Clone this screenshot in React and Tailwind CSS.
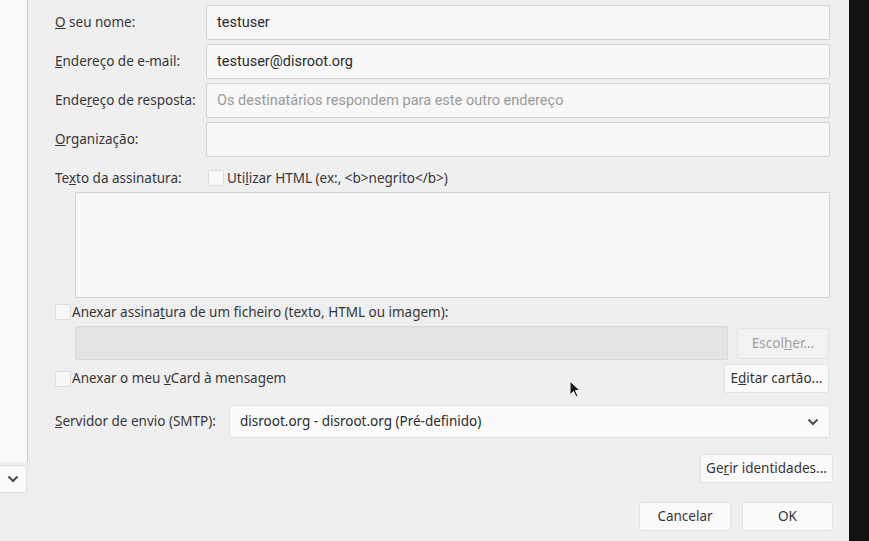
import React from "react";

const label = "text-[13.5px] text-[#363636] font-['Noto_Sans',sans-serif] whitespace-nowrap";
const field = "h-[35px] flex-1 mr-[3px] bg-[#f8f8f8] border border-[#d3d3d3] rounded-[2px] px-[10px] flex items-center text-[14.5px] font-['Roboto',sans-serif]";
const btn = "h-[29px] bg-[#fafafa] border border-[#e3e3e3] rounded-[2px] flex items-center justify-center text-[13.5px] text-[#363636] font-['Noto_Sans',sans-serif]";

function Box() {
  return <div className="w-[16px] h-[16px] shrink-0 bg-[#f8f8f8] border border-[#dcdcdc] rounded-[2px]" />;
}

function Chevron({ className }) {
  return (
    <svg className={className} width="12" height="8" viewBox="0 0 12 8" fill="none">
      <path d="M1.5 1.5 L6 6 L10.5 1.5" stroke="#4a4a4a" strokeWidth="2" />
    </svg>
  );
}

export default function App() {
  return (
    <div className="relative flex h-[541px] w-[869px] overflow-hidden bg-[#efefef]">
      {/* side list */}
      <div className="w-[28px] shrink-0 flex flex-col">
        <div className="h-[462px] bg-[#f9f9f9] border-r border-[#c9c9c9]" />
        <div className="mt-[3px] h-[28px] w-[27px] bg-[#fafafa] border border-[#e2e2e2] border-l-0 rounded-r-[2px] flex items-center justify-center">
          <Chevron />
        </div>
      </div>

      <div className="flex-1 pl-[27px] pr-[16px] pt-[5px]">
        <div className="flex items-center">
          <div className={`${label} w-[151px]`}><u>O</u> seu nome:</div>
          <div className={`${field} text-[#2a2a2a]`}>testuser</div>
        </div>
        <div className="flex items-center mt-[4px]">
          <div className={`${label} w-[151px]`}><u>E</u>ndereço de e-mail:</div>
          <div className={`${field} text-[#2a2a2a]`}>testuser@disroot.org</div>
        </div>
        <div className="flex items-center mt-[4px]">
          <div className={`${label} w-[151px]`}>Ende<u>r</u>eço de resposta:</div>
          <div className={`${field} text-[#9a9a9a]`}>Os destinatários respondem para este outro endereço</div>
        </div>
        <div className="flex items-center mt-[4px]">
          <div className={`${label} w-[151px]`}><u>O</u>rganização:</div>
          <div className={field}></div>
        </div>

        <div className="flex items-center mt-[11px] h-[20px]">
          <div className={`${label} w-[153px]`}>Te<u>x</u>to da assinatura:</div>
          <Box />
          <div className={`${label} ml-[3px]`}>Uti<u>l</u>izar HTML (ex:, &lt;b&gt;negrito&lt;/b&gt;)</div>
        </div>
        <div className="ml-[20px] mr-[3px] mt-[4px] h-[106px] bg-[#f8f8f8] border border-[#d3d3d3] rounded-[2px]" />

        <div className="flex items-center mt-[4px] h-[20px]">
          <Box />
          <div className={`${label} ml-[1px]`}>Anexar assina<u>t</u>ura de um ficheiro (texto, HTML ou imagem):</div>
        </div>
        <div className="flex items-center mt-[4px]">
          <div className="ml-[20px] flex-1 h-[34px] bg-[#e3e3e3] border border-[#d8d8d8] rounded-[2px]" />
          <div className={`${btn} ml-[9px] mr-[4px] w-[92px] h-[31px] !bg-[#f2f2f2] !text-[#a0a0a0]`}>Escol<u>h</u>er...</div>
        </div>
        <div className="flex items-center mt-[4px]">
          <Box />
          <div className={`${label} ml-[1px] flex-1`}>Anexar o meu <u>v</u>Card à mensagem</div>
          <div className={`${btn} mr-[4px] w-[105px]`}>E<u>d</u>itar cartão...</div>
        </div>

        <div className="flex items-center mt-[12px]">
          <div className={`${label} w-[174px]`}><u>S</u>ervidor de envio (SMTP):</div>
          <div className="h-[33px] flex-1 mr-[3px] bg-[#fafafa] border border-[#e2e2e2] rounded-[2px] pl-[10px] pr-[10px] flex items-center justify-between">
            <span className="text-[13.5px] text-[#2a2a2a] font-['Noto_Sans',sans-serif]">disroot.org - disroot.org (Pré-definido)</span>
            <Chevron />
          </div>
        </div>

        <div className="flex justify-end mt-[16px]">
          <div className={`${btn} w-[133px]`}>Ge<u>r</u>ir identidades...</div>
        </div>
        <div className="flex justify-end gap-[11px] mt-[19px]">
          <div className={`${btn} w-[92px]`}>Cancelar</div>
          <div className={`${btn} w-[91px]`}>OK</div>
        </div>
      </div>

      <div className="w-[20px] shrink-0 bg-[#121212]" />

      {/* mouse pointer */}
      <svg className="absolute left-[569px] top-[380px]" width="13" height="19" viewBox="0 0 13 19">
        <path d="M1 1 L1 15 L4.5 11.5 L7 17 L9 16 L6.5 10.5 L11 10.5 Z" fill="#1a1a1a" stroke="#ffffff" strokeWidth="1" />
      </svg>
    </div>
  );
}
